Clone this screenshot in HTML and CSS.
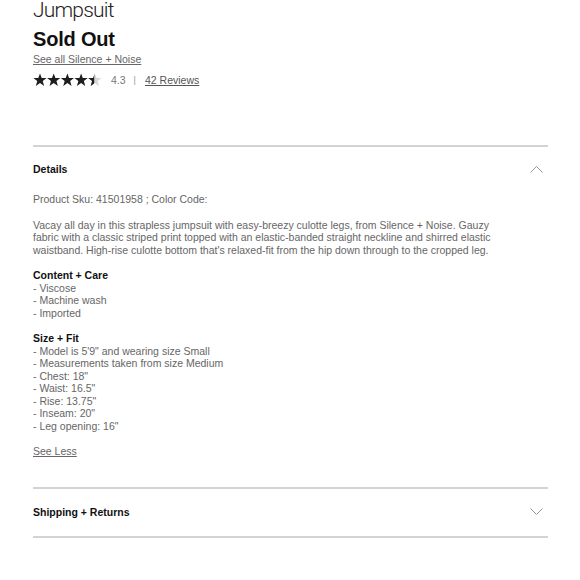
FILE: index.html
```html
<!DOCTYPE html>
<html>
<head>
<meta charset="utf-8">
<link rel="stylesheet" href="styles.css">
</head>
<body>
<div class="page">
  <div class="product">
    <h1 class="name">Jumpsuit</h1>
    <div class="price">Sold Out</div>
    <a class="brand" href="#">See all Silence + Noise</a>
    <div class="rating">
      <span class="stars">
        <svg width="70" height="14" viewBox="0 0 70 14">
          <defs>
            <path id="st" d="M7 0.4 L8.7 5 L13.6 5.1 L9.75 8.1 L11.15 12.9 L7 10.1 L2.85 12.9 L4.25 8.1 L0.4 5.1 L5.3 5 Z"/>
            <clipPath id="half"><rect x="0" y="0" width="6.4" height="14"/></clipPath>
          </defs>
          <use href="#st" x="0" fill="#1e1e1e"/>
          <use href="#st" x="13.7" fill="#1e1e1e"/>
          <use href="#st" x="27.4" fill="#1e1e1e"/>
          <use href="#st" x="41.1" fill="#1e1e1e"/>
          <g transform="translate(54.8 0)">
            <use href="#st" fill="#d6d6d6"/>
            <use href="#st" fill="#1e1e1e" clip-path="url(#half)"/>
          </g>
        </svg>
      </span>
      <span class="score">4.3</span>
      <span class="sep">|</span>
      <a class="reviews" href="#">42 Reviews</a>
    </div>
  </div>

  <section class="acc open">
    <div class="acc-head">
      <span class="acc-title">Details</span>
      <svg class="chev" width="13" height="8" viewBox="0 0 13 8"><path d="M0.5 7.5 L6.5 1.5 L12.5 7.5" fill="none" stroke="#999" stroke-width="1"/></svg>
    </div>
    <div class="acc-body">
      <p>Product Sku: 41501958 ; Color Code:</p>
      <p>Vacay all day in this strapless jumpsuit with easy-breezy culotte legs, from Silence + Noise. Gauzy fabric with a classic striped print topped with an elastic-banded straight neckline and shirred elastic waistband. High-rise culotte bottom that's relaxed-fit from the hip down through to the cropped leg.</p>
      <div class="group">
        <h4>Content + Care</h4>
        <ul>
          <li>- Viscose</li>
          <li>- Machine wash</li>
          <li>- Imported</li>
        </ul>
      </div>
      <div class="group">
        <h4>Size + Fit</h4>
        <ul>
          <li>- Model is 5'9" and wearing size Small</li>
          <li>- Measurements taken from size Medium</li>
          <li>- Chest: 18"</li>
          <li>- Waist: 16.5"</li>
          <li>- Rise: 13.75"</li>
          <li>- Inseam: 20"</li>
          <li>- Leg opening: 16"</li>
        </ul>
      </div>
      <a class="less" href="#">See Less</a>
    </div>
  </section>

  <section class="acc closed">
    <div class="acc-head">
      <span class="acc-title">Shipping + Returns</span>
      <svg class="chev" width="13" height="8" viewBox="0 0 13 8"><path d="M0.5 0.5 L6.5 6.5 L12.5 0.5" fill="none" stroke="#999" stroke-width="1"/></svg>
    </div>
  </section>
</div>
</body>
</html>
```

FILE: styles.css
```css
html, body {
  margin: 0;
  padding: 0;
  background: #fff;
}
body {
  font-family: "Liberation Sans", Arial, sans-serif;
  color: #333;
}
.page {
  width: 515px;
  margin-left: 33px;
}
.product {
  display: flex;
  flex-direction: column;
  align-items: flex-start;
  margin-top: -2px;
}
.name {
  margin: 0;
  font-family: Roboto, "Liberation Sans", sans-serif;
  font-weight: 300;
  font-size: 21px;
  line-height: 24px;
  letter-spacing: -0.8px;
  color: #222;
}
.price {
  margin-top: 4px;
  font-size: 20px;
  font-weight: 700;
  line-height: 26px;
  letter-spacing: -0.2px;
  color: #111;
}
.brand {
  font-size: 10.5px;
  line-height: 14px;
  color: #666;
  text-decoration: underline;
}
.rating {
  margin-top: 6px;
  display: flex;
  align-items: center;
  height: 16px;
  font-size: 10.5px;
  color: #777;
}
.stars svg { display: block; }
.score { margin-left: 8px; }
.sep { margin-left: 8px; color: #999; font-size: 9px; }
.reviews {
  margin-left: 9px;
  color: #555;
  text-decoration: underline;
}
.acc {
  border-top: 2px solid #d3d3d3;
}
.acc.open { margin-top: 57px; }
.acc.closed { border-bottom: 2px solid #d3d3d3; }
.acc-head {
  display: flex;
  justify-content: space-between;
  align-items: center;
  height: 44px;
  padding-right: 5px;
}
.acc.closed .acc-head { height: 47px; }
.acc-title {
  font-size: 10.5px;
  font-weight: 700;
  color: #111;
}
.chev { display: block; }
.acc-body {
  max-width: 470px;
  padding-bottom: 29px;
  font-size: 10.5px;
  line-height: 12.5px;
  color: #666;
}
.acc-body p { margin: 0 0 13px; }
.acc-body p:first-child { margin-top: 2px; }
.group { margin-bottom: 13px; }
.group h4 {
  margin: 0;
  font-size: 10.5px;
  font-weight: 700;
  color: #111;
}
.group ul {
  margin: 0;
  padding: 0;
  list-style: none;
}
.less {
  display: inline-block;
  color: #666;
  text-decoration: underline;
}
```
